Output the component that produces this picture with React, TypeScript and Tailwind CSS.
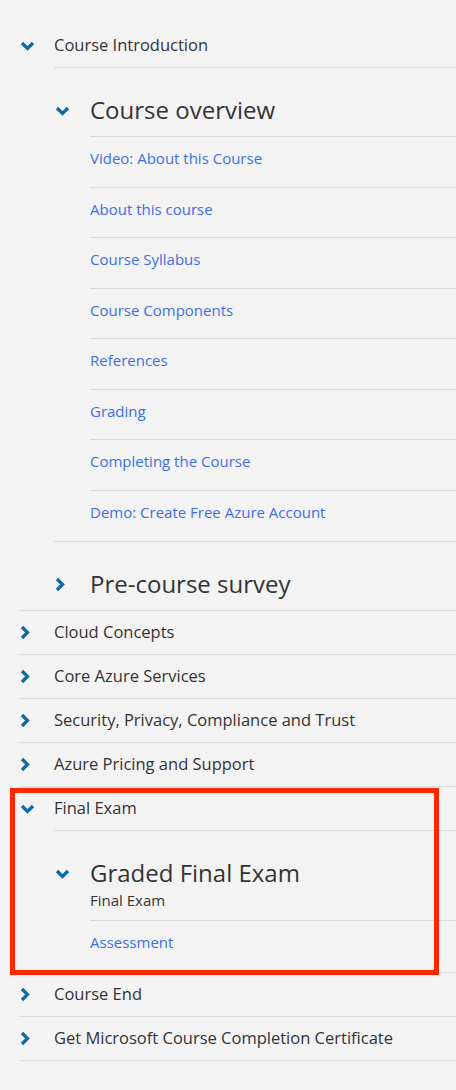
type Sub = { title: string; note?: string; open: boolean; items: string[] };
type Section = { title: string; open: boolean; subs: Sub[] };

const sections: Section[] = [
  {
    title: 'Course Introduction',
    open: true,
    subs: [
      {
        title: 'Course overview',
        open: true,
        items: [
          'Video: About this Course',
          'About this course',
          'Course Syllabus',
          'Course Components',
          'References',
          'Grading',
          'Completing the Course',
          'Demo: Create Free Azure Account',
        ],
      },
      { title: 'Pre-course survey', open: false, items: [] },
    ],
  },
  { title: 'Cloud Concepts', open: false, subs: [] },
  { title: 'Core Azure Services', open: false, subs: [] },
  { title: 'Security, Privacy, Compliance and Trust', open: false, subs: [] },
  { title: 'Azure Pricing and Support', open: false, subs: [] },
  {
    title: 'Final Exam',
    open: true,
    subs: [{ title: 'Graded Final Exam', note: 'Final Exam', open: true, items: ['Assessment'] }],
  },
  { title: 'Course End', open: false, subs: [] },
  { title: 'Get Microsoft Course Completion Certificate', open: false, subs: [] },
];

function Chevron({ open }: { open: boolean }) {
  if (open) {
    return (
      <svg width="15" height="10" viewBox="0 0 15 10" className="text-[#0b6aa6]">
        <path d="M2 2 L7.5 7.5 L13 2" fill="none" stroke="currentColor" strokeWidth="3.2" />
      </svg>
    );
  }
  return (
    <svg width="10" height="15" viewBox="0 0 10 15" className="text-[#0b6aa6]">
      <path d="M2 2 L7.5 7.5 L2 13" fill="none" stroke="currentColor" strokeWidth="3.2" />
    </svg>
  );
}

function SubSection({ sub, last }: { sub: Sub; last: boolean }) {
  return (
    <li className={last ? '' : 'border-b border-[#dcdcdc]'}>
      <div className="flex">
        <div className={`flex w-[36px] items-start pl-px ${sub.open ? 'pt-[38px]' : 'pt-[35px]'}`}>
          <Chevron open={sub.open} />
        </div>
        <div className={`flex-1 pt-[25px] ${sub.open ? 'border-b border-[#dcdcdc]' : ''} ${sub.note ? 'pb-[10px]' : 'pb-[9px]'}`}>
          <div className="text-[24px] leading-[34px] text-[#333]">{sub.title}</div>
          {sub.note && <div className="text-[15px] leading-[20px] text-[#333]">{sub.note}</div>}
        </div>
      </div>
      {sub.open && (
        <ul className="pl-[36px]">
          {sub.items.map((item, i) => (
            <li
              key={item}
              className={`flex h-[50.5px] items-start pt-[10px] ${i < sub.items.length - 1 ? 'border-b border-[#dcdcdc]' : ''}`}
            >
              <a href="#" className="text-[15px] leading-[22px] text-[#3d6fe6]">
                {item}
              </a>
            </li>
          ))}
        </ul>
      )}
    </li>
  );
}

export default function App() {
  return (
    <div className="relative min-h-[1090px] w-[456px] bg-[#f3f3f3] pt-[24px] font-['Open_Sans',sans-serif]">
      <ul className="pl-[19px]">
        {sections.map((s) => (
          <li key={s.title} className="border-b border-[#dcdcdc]">
            <div className="flex h-[43px] items-center">
              <div className="flex w-[35px] items-center pl-px">
                <Chevron open={s.open} />
              </div>
              <span className="text-[16.5px] text-[#333]">{s.title}</span>
            </div>
            {s.open && (
              <div className="pl-[35px]">
                <div className="border-t border-[#dcdcdc]" />
                <ul>
                  {s.subs.map((sub, i) => (
                    <SubSection key={sub.title} sub={sub} last={i === s.subs.length - 1} />
                  ))}
                </ul>
              </div>
            )}
          </li>
        ))}
      </ul>
      <div className="pointer-events-none absolute left-[10px] top-[788px] h-[187px] w-[429px] border-[5px] border-[#ff2600]" />
    </div>
  );
}
